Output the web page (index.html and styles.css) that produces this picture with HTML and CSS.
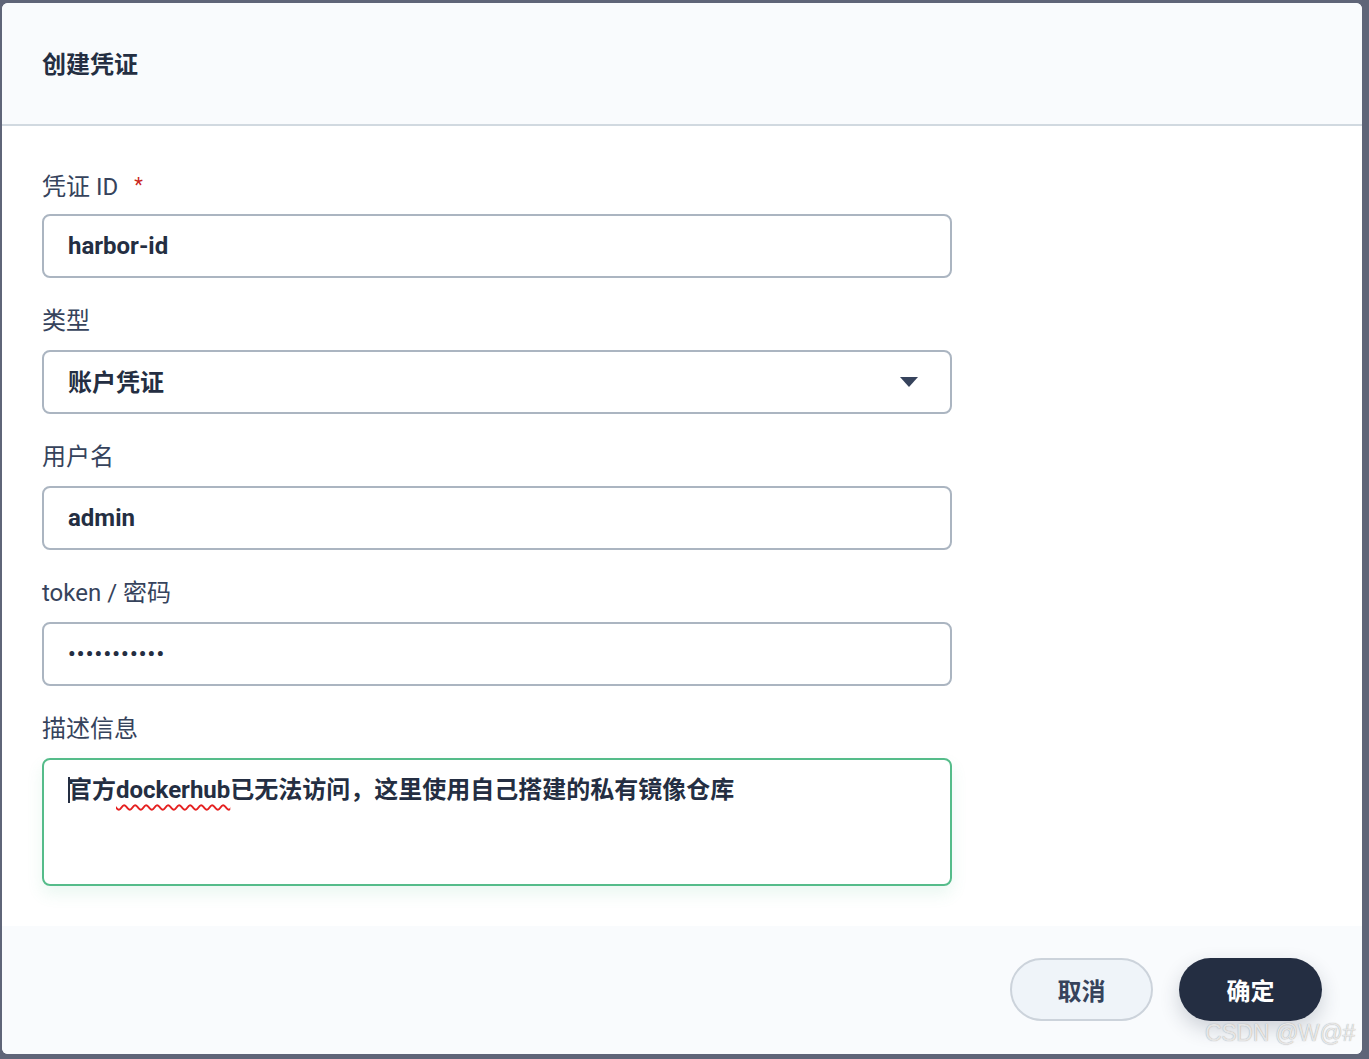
FILE: index.html
```html
<!DOCTYPE html>
<html lang="zh-CN">
<head>
    <meta charset="UTF-8">
    <title>创建凭证</title>
    <link rel="stylesheet" href="styles.css">
</head>
<body>
    <div class="modal">
        <div class="modal-header">
            <h2>创建凭证</h2>
        </div>

        <div class="modal-body">
            <div class="field">
                <label>凭证 ID <span class="required">*</span></label>
                <div class="input">harbor-id</div>
            </div>

            <div class="field">
                <label>类型</label>
                <div class="input select">
                    <span>账户凭证</span>
                    <svg class="arrow" width="20" height="12" viewBox="0 0 20 12"><path d="M1 1 L19 1 L10 11 Z" fill="#36435c"/></svg>
                </div>
            </div>

            <div class="field">
                <label>用户名</label>
                <div class="input">admin</div>
            </div>

            <div class="field">
                <label>token / 密码</label>
                <div class="input password">•••••••••••</div>
            </div>

            <div class="field">
                <label>描述信息</label>
                <div class="input textarea"><span class="caret"></span>官方<span class="misspelled">dockerhub</span>已无法访问，这里使用自己搭建的私有镜像仓库</div>
            </div>
        </div>

        <div class="modal-footer">
            <button class="btn btn-cancel">取消</button>
            <button class="btn btn-primary">确定</button>
        </div>
    </div>

    <div class="watermark">CSDN @W@#</div>
</body>
</html>
```

FILE: styles.css
```css
* {
    margin: 0;
    padding: 0;
    box-sizing: border-box;
    font-family: Roboto, "Noto Sans CJK SC", sans-serif;
}

body {
    background: #5f6578;
    width: 1369px;
    height: 1059px;
    overflow: hidden;
    position: relative;
}

.modal {
    margin: 3px 0 0 2px;
    width: 1360px;
    height: 1051px;
    background: #ffffff;
    border-radius: 6px;
    overflow: hidden;
    display: flex;
    flex-direction: column;
}

.modal-header {
    height: 123px;
    background: #f9fbfd;
    border-bottom: 2px solid #d1d9e0;
    display: flex;
    align-items: center;
    padding: 0 40px 2px;
}

.modal-header h2 {
    font-size: 24px;
    font-weight: 700;
    color: #242e42;
}

.modal-body {
    padding: 44px 40px 40px;
    display: flex;
    flex-direction: column;
    gap: 28px;
    background: #ffffff;
}

.field label {
    display: block;
    height: 30px;
    line-height: 30px;
    margin-bottom: 14px;
    font-size: 24px;
    color: #36435c;
}

.required {
    color: #ca2621;
    font-size: 20px;
    margin-left: 10px;
    vertical-align: 3px;
}

.input {
    width: 910px;
    height: 64px;
    border: 2px solid #abb5c1;
    border-radius: 8px;
    padding: 0 24px;
    display: flex;
    align-items: center;
    font-size: 24px;
    font-weight: 700;
    color: #242e42;
}

.select {
    justify-content: space-between;
    padding-right: 31px;
}

.select span {
    margin-top: -3px;
}

.arrow {
    display: block;
}

.password {
    font-size: 21px;
    letter-spacing: 1.3px;
}

.textarea {
    height: 128px;
    padding-top: 14px;
    border-color: #55bc8a;
    box-shadow: 0 8px 16px rgba(85, 188, 138, 0.12);
    line-height: 32px;
    display: block;
}

.caret {
    display: inline-block;
    width: 2px;
    height: 26px;
    background: #242e42;
    vertical-align: -5px;
    margin-right: -2px;
}

.misspelled {
    text-decoration: underline wavy #e52020;
    text-decoration-thickness: 1.6px;
    text-underline-offset: 6px;
}

.modal-footer {
    flex: 1;
    background: #f9fbfd;
    display: flex;
    justify-content: flex-end;
    align-items: center;
    gap: 26px;
    padding: 0 40px 2px;
}

.btn {
    width: 143px;
    height: 63px;
    border-radius: 32px;
    font-size: 24px;
    font-weight: 700;
    cursor: pointer;
}

.btn-cancel {
    background: #eff4f9;
    border: 2px solid #ccd3db;
    color: #36435c;
}

.btn-primary {
    background: #242e42;
    border: none;
    color: #ffffff;
    box-shadow: 0 8px 20px rgba(36, 46, 66, 0.2);
}

.watermark {
    position: absolute;
    left: 1205px;
    top: 1020px;
    font-family: "Liberation Sans", sans-serif;
    font-size: 23px;
    letter-spacing: -0.3px;
    color: rgba(240, 240, 240, 0.9);
    text-shadow: 0 0 1px rgba(110, 110, 110, 0.7);
    white-space: nowrap;
}
```
